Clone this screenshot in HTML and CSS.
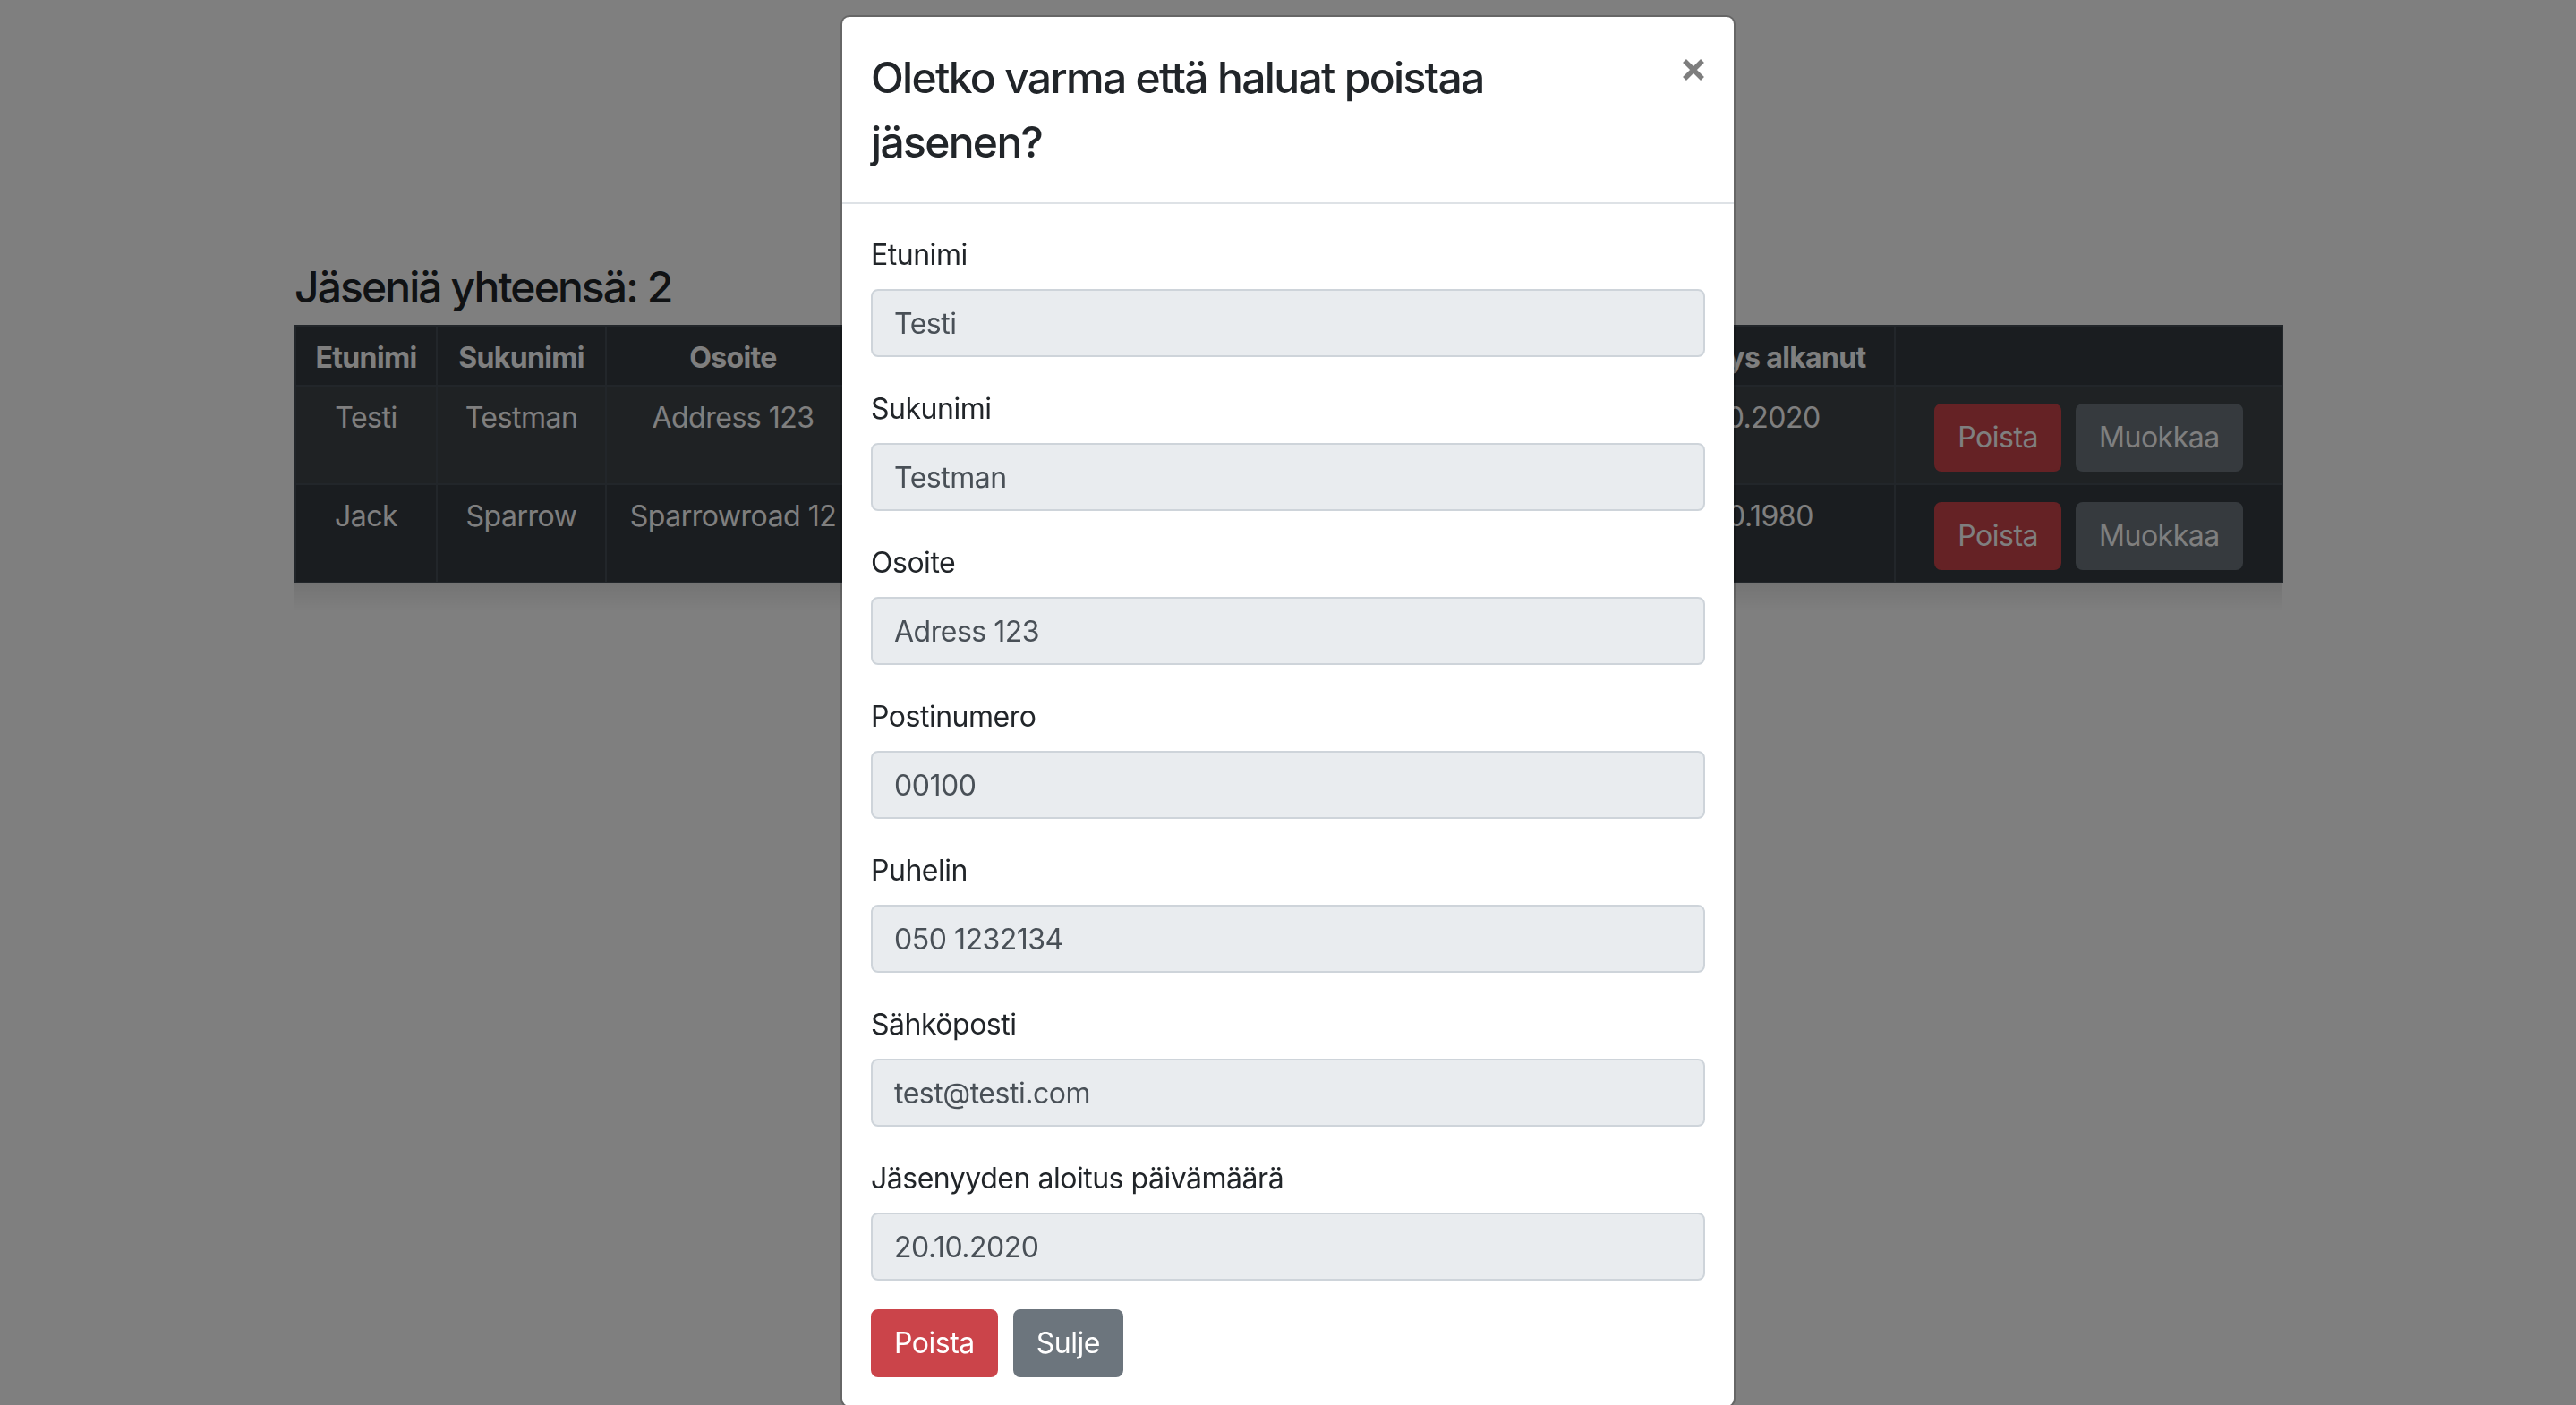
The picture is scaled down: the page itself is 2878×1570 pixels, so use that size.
FILE: index.html
```html
<!DOCTYPE html>
<html lang="fi">
<head>
<meta charset="utf-8">
<title>Jäsenet</title>
<link rel="stylesheet" href="styles.css">
</head>
<body>
<main class="container">
  <h4 class="count">Jäseniä yhteensä: 2</h4>
  <table class="members">
    <colgroup>
      <col class="c1"><col class="c2"><col class="c3"><col class="c4"><col class="c5"><col class="c6"><col class="c7"><col class="c8">
    </colgroup>
    <thead>
      <tr>
        <th>Etunimi</th><th>Sukunimi</th><th>Osoite</th><th>Postinumero</th><th>Puhelin</th><th>Sähköposti</th><th>Jäsenyys alkanut</th><th></th>
      </tr>
    </thead>
    <tbody>
      <tr>
        <td>Testi</td><td>Testman</td><td>Address 123</td><td>00100</td><td>050 1232134</td><td>test@testi.com</td><td>20.10.2020</td>
        <td><div class="row-actions"><button class="btn btn-danger">Poista</button><button class="btn btn-secondary">Muokkaa</button></div></td>
      </tr>
      <tr>
        <td>Jack</td><td>Sparrow</td><td>Sparrowroad 12</td><td>00200</td><td>040 1234567</td><td>jack@sparrow.com</td><td>10.10.1980</td>
        <td><div class="row-actions"><button class="btn btn-danger">Poista</button><button class="btn btn-secondary">Muokkaa</button></div></td>
      </tr>
    </tbody>
  </table>
  <div class="table-shadow"></div>
</main>

<div class="backdrop"></div>

<div class="modal">
  <div class="dialog">
    <div class="content">
      <div class="header">
        <h5 class="title">Oletko varma että haluat poistaa<br>jäsenen?</h5>
        <button class="close" type="button" aria-label="Close">
          <svg width="26" height="26" viewBox="0 0 26 26"><path d="M3 3 L23 23 M23 3 L3 23" stroke="#000" stroke-width="5.5" fill="none"/></svg>
        </button>
      </div>
      <div class="body">
        <div class="group"><label>Etunimi</label><input class="field" type="text" value="Testi" readonly></div>
        <div class="group"><label>Sukunimi</label><input class="field" type="text" value="Testman" readonly></div>
        <div class="group"><label>Osoite</label><input class="field" type="text" value="Adress 123" readonly></div>
        <div class="group"><label>Postinumero</label><input class="field" type="text" value="00100" readonly></div>
        <div class="group"><label>Puhelin</label><input class="field" type="text" value="050 1232134" readonly></div>
        <div class="group"><label>Sähköposti</label><input class="field" type="text" value="test@testi.com" readonly></div>
        <div class="group"><label>Jäsenyyden aloitus päivämäärä</label><input class="field" type="text" value="20.10.2020" readonly></div>
        <div class="footer-actions">
          <button class="btn btn-danger" type="button">Poista</button>
          <button class="btn btn-secondary" type="button">Sulje</button>
        </div>
      </div>
    </div>
  </div>
</div>
</body>
</html>
```

FILE: styles.css
```css
html, body {
  margin: 0;
  padding: 0;
}

body {
  font-family: Inter, "Liberation Sans", sans-serif;
  font-size: 32px;
  line-height: 48px;
  letter-spacing: -0.015em;
  color: #212529;
  background: #fff;
  overflow: hidden;
}

.container {
  width: 2220px;
  margin: 0 auto;
  padding-top: 292px;
}

.count {
  margin: 0 0 13px;
  font-size: 48px;
  line-height: 57.6px;
  font-weight: 500;
  letter-spacing: -0.04em;
}

.members {
  width: 100%;
  table-layout: fixed;
  border-collapse: collapse;
  background: #343a40;
  color: #fff;
}

.c1 { width: 158px; }
.c2 { width: 189px; }
.c3 { width: 284px; }
.c4 { width: 230px; }
.c5 { width: 260px; }
.c6 { width: 338px; }
.c7 { width: 328px; }
.c8 { width: 433px; }

.members th,
.members td {
  border: 2px solid #454d55;
  padding: 11px 9px 6px;
  text-align: center;
  vertical-align: top;
  white-space: nowrap;
  overflow: hidden;
}

.members th {
  font-weight: 700;
  letter-spacing: -0.02em;
}

.members tbody tr:nth-child(odd) {
  background: rgba(255, 255, 255, 0.05);
}

.row-actions {
  display: flex;
  justify-content: center;
}

.row-actions .btn {
  margin: 8px 8px 7px;
}

.table-shadow {
  height: 32px;
  background: linear-gradient(rgba(0, 0, 0, 0.09), rgba(0, 0, 0, 0));
}

.btn {
  display: inline-block;
  font-family: inherit;
  font-size: 32px;
  line-height: 48px;
  font-weight: 400;
  letter-spacing: -0.015em;
  padding: 12px 24px;
  border: 2px solid transparent;
  border-radius: 8px;
  color: #fff;
  cursor: pointer;
}

.btn-danger {
  background: #cb444a;
  border-color: #cb444a;
}

.btn-secondary {
  background: #6c757d;
  border-color: #6c757d;
}

.backdrop {
  position: fixed;
  inset: 0;
  background: rgba(0, 0, 0, 0.5);
}

.modal {
  position: fixed;
  inset: 0;
  overflow: hidden;
}

.dialog {
  width: 1000px;
  margin: 17px auto 0;
}

.content {
  background: #fff;
  background-clip: padding-box;
  border: 2px solid rgba(0, 0, 0, 0.2);
  border-radius: 10px;
}

.header {
  display: flex;
  align-items: flex-start;
  justify-content: space-between;
  padding: 32px 32px 31px;
  border-bottom: 2px solid #dee2e6;
}

.title {
  margin: 0;
  font-size: 48px;
  line-height: 72px;
  font-weight: 500;
  letter-spacing: -0.035em;
  color: #212529;
}

.close {
  padding: 32px;
  margin: -32px -32px -32px auto;
  background: transparent;
  border: 0;
  line-height: 0;
  opacity: 0.5;
  cursor: pointer;
}

.close svg {
  display: block;
  margin-top: 14px;
}

.body {
  padding: 31px 32px 32px;
}

.group {
  margin-bottom: 32px;
}

.group label {
  display: block;
  padding-top: 2px;
  margin-bottom: 14px;
}

.field {
  display: block;
  width: 100%;
  box-sizing: border-box;
  height: 76px;
  padding: 12px 24px;
  font-family: inherit;
  font-size: 32px;
  line-height: 48px;
  letter-spacing: -0.015em;
  color: #495057;
  background: #e9ecef;
  border: 2px solid #ced4da;
  border-radius: 8px;
  outline: none;
}

.footer-actions {
  display: flex;
  gap: 17px;
}
```
